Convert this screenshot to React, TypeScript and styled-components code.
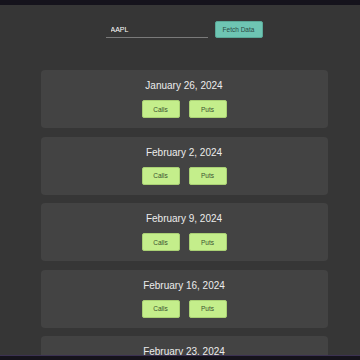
import styled, { createGlobalStyle } from "styled-components";

const GlobalStyle = createGlobalStyle`
  html, body {
    margin: 0;
    padding: 0;
    background: #15131c;
    font-family: "Liberation Sans", Arial, sans-serif;
  }
`;

const Frame = styled.div`
  display: flex;
  flex-direction: column;
  height: 360px;
  overflow: hidden;
`;

const Strip = styled.div<{ $bottom?: boolean }>`
  height: 5px;
  flex: none;
  background: #15131c;
  border-top: ${(p) => (p.$bottom ? "1px solid #3b3152" : "none")};
  box-sizing: border-box;
`;

const Main = styled.main`
  flex: 1;
  overflow: hidden;
  background: #363636;
  padding: 0 0 0 8px;
`;

const SearchBar = styled.div`
  display: flex;
  justify-content: center;
  align-items: flex-end;
  gap: 7px;
  padding-top: 16px;
  height: 17px;
`;

const TickerInput = styled.input`
  width: 102px;
  height: 17px;
  box-sizing: border-box;
  background: transparent;
  border: none;
  border-bottom: 1px solid #7a7a7a;
  color: #ffffff;
  font-family: inherit;
  font-size: 7px;
  padding: 0 5px;
  outline: none;
`;

const FetchButton = styled.button`
  width: 48px;
  height: 17px;
  background: #6ec5b3;
  border: 1px solid #5aa898;
  border-radius: 2px;
  color: #2b4a44;
  font-family: inherit;
  font-size: 6.5px;
  padding: 0;
`;

const List = styled.div`
  display: flex;
  flex-direction: column;
  align-items: center;
  gap: 8.5px;
  padding-top: 32px;
`;

const Card = styled.section`
  width: 287px;
  box-sizing: border-box;
  background: #434343;
  border-radius: 4px;
  padding: 9px 0 10px;
  display: flex;
  flex-direction: column;
  align-items: center;
  gap: 7px;
`;

const DateTitle = styled.h3`
  margin: 0;
  font-size: 10px;
  line-height: 14px;
  font-weight: normal;
  color: #ececec;
`;

const Actions = styled.div`
  display: flex;
  gap: 9px;
`;

const OptionButton = styled.button`
  width: 38px;
  height: 18px;
  background: #c4ee8b;
  border: 1px solid #a9d074;
  border-radius: 2px;
  color: #3a5230;
  font-family: inherit;
  font-size: 6.5px;
  padding: 0;
`;

const dates = [
  "January 26, 2024",
  "February 2, 2024",
  "February 9, 2024",
  "February 16, 2024",
  "February 23, 2024",
];

export default function App() {
  return (
    <>
      <GlobalStyle />
      <Frame>
        <Strip />
        <Main>
          <SearchBar>
            <TickerInput defaultValue="AAPL" />
            <FetchButton>Fetch Data</FetchButton>
          </SearchBar>
          <List>
            {dates.map((d) => (
              <Card key={d}>
                <DateTitle>{d}</DateTitle>
                <Actions>
                  <OptionButton>Calls</OptionButton>
                  <OptionButton>Puts</OptionButton>
                </Actions>
              </Card>
            ))}
          </List>
        </Main>
        <Strip $bottom />
      </Frame>
    </>
  );
}
